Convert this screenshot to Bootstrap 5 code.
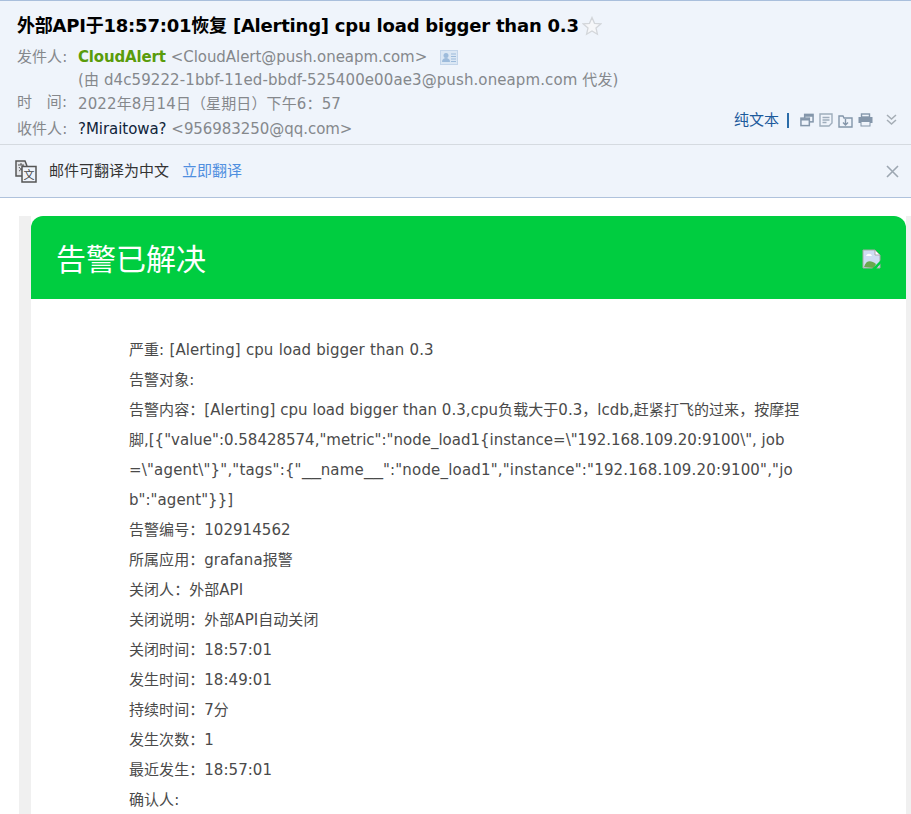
<!DOCTYPE html>
<html lang="zh-CN">
<head>
  <meta charset="UTF-8">
  <meta name="viewport" content="width=device-width, initial-scale=1.0">
  <title>告警已解决</title>
  <link href="https://cdn.jsdelivr.net/npm/bootstrap@5.3.2/dist/css/bootstrap.min.css" rel="stylesheet">
  <style>
    html, body { height: 814px; overflow: hidden; }
    body { font-family: "DejaVu Sans", Verdana, "Noto Sans CJK SC", sans-serif; background: #fff; }
    .mail-head { background: #eff4fb; border-top: 1px solid #a9bfdc; border-bottom: 1px solid #d5dae0; height: 145px; padding: 13px 17px 0; position: relative; }
    .mail-title { font-size: 18px; font-weight: 700; color: #000; line-height: 24px; margin: 0 0 7.7px; letter-spacing: -.22px; }
    .star-ico { margin-left: 3px; vertical-align: -4px; }
    .meta-row { display: flex; font-size: 15px; line-height: 23.3px; color: #85888c; white-space: nowrap; letter-spacing: .05px; }
    .meta-key { width: 61px; flex: none; }
    .date-row { margin-top: -1px; margin-bottom: 1px; letter-spacing: .12px; }
    .sender-name { color: #5a9c0b; font-weight: 700; letter-spacing: -.15px; }
    .to-name { color: #10243a; letter-spacing: -.05px; }
    .addr-text { letter-spacing: -.05px; }
    .proxy-text { letter-spacing: .1px; }
    .card-ico { margin-left: 8px; vertical-align: -3px; }
    .tc-colon { font-family: "Noto Sans CJK TC", sans-serif; }
    .head-tools { position: absolute; right: 14px; top: 108px; gap: 5px; font-size: 15px; color: #1c5a9c; }
    .tools-sep { width: 2px; height: 15px; background: #2b6ca8; margin: 0 6px 0 3px; }
    .trans-bar { background: #eff4fb; border-bottom: 1px solid #afc2dc; height: 53px; padding: 0 12px 0 15px; font-size: 15px; color: #333; }
    .trans-link { color: #4f8fdf; margin-left: 13px; padding-top: 1px; }
    .trans-text { margin-left: 12px; padding-top: 1px; }
    .mail-body { background: #fff; padding: 18px 5px 0 19px; }
    .gray-wrap { background: #f0f0f0; padding-left: 12px; margin-right: -5px; padding-right: 5px; }
    .alert-box { background: #fff; }
    .alert-top { background: #00cd40; height: 83px; border-radius: 12px 12px 0 0; padding: 0 24px 0 25px; color: #fff; }
    .alert-title { font-size: 30px; font-weight: 400; margin: 0 0 2px; font-family: "Noto Sans CJK SC", sans-serif; }
    .broken-ico { margin-top: 2px; }
    .alert-body { padding: 36px 100px 30px 98px; font-size: 15px; line-height: 30px; color: #4a4a4a; white-space: nowrap; letter-spacing: .05px; }
    .first-row { word-spacing: .5px; }
    .last-row { line-height: 22px; padding-top: 4px; }
    .line-tight { letter-spacing: 0; }
    .line-wide { letter-spacing: .18px; }
    .wide-under { display: inline-block; width: 19px; letter-spacing: 0; transform: scaleX(1.27); transform-origin: left; }
  </style>
</head>
<body>
  <div class="mail-head">
    <h1 class="mail-title">外部API于18:57:01恢复 [Alerting] cpu load bigger than 0.3<svg class="star-ico" width="20" height="20" viewBox="0 0 20 20"><path d="M10 1.500l2.500 5.800 6.200.6-4.700 4.100 1.400 6.200L10 15l-5.400 3.200 1.400-6.200-4.700-4.100 6.200-.6z" fill="#f6f7f9" stroke="#d3d6da" stroke-width="1.300"/></svg></h1>
    <div class="meta-row"><span class="meta-key">发件人:</span><span><span class="sender-name">CloudAlert</span> <span class="addr-text">&lt;CloudAlert@push.oneapm.com&gt;</span>
      <svg class="card-ico" width="18" height="15" viewBox="0 0 18 15"><rect width="18" height="15" fill="#c3d5ea"/><rect x="1" y="1" width="16" height="13" fill="#dbe7f4"/><circle cx="6" cy="5.500" r="2.500" fill="#9dbbdb"/><path d="M2 12c0-3 2-4 4-4s4 1 4 4z" fill="#9dbbdb"/><path d="M11 4h5M11 6.500h5M11 9h5M11 11.500h5" stroke="#9dbbdb"/></svg></span></div>
    <div class="meta-row"><span class="meta-key"></span><span class="proxy-text">(由 d4c59222-1bbf-11ed-bbdf-525400e00ae3@push.oneapm.com 代发)</span></div>
    <div class="meta-row date-row"><span class="meta-key">时&nbsp;&nbsp;&nbsp;间:</span><span>2022年8月14日（星期日）下午6<span class="tc-colon">：</span>57</span></div>
    <div class="meta-row"><span class="meta-key">收件人:</span><span><span class="to-name">?Miraitowa?</span> <span class="addr-text">&lt;956983250@qq.com&gt;</span></span></div>
    <div class="head-tools d-flex align-items-center">
      <span>纯文本</span><span class="tools-sep"></span>
      <svg width="14" height="14" viewBox="0 0 15 14" fill="none" stroke="#8496aa" stroke-width="1.600"><rect x="5" y="1" width="9" height="8"/><rect x="1" y="5" width="9" height="8" fill="#eff4fb"/><path d="M1 6.500h9M5 2.500h9" stroke-width="2"/></svg>
      <svg width="14" height="14" viewBox="0 0 14 14" fill="none" stroke="#9fadbc" stroke-width="1.400"><path d="M1 1h12v9l-3 3H1z"/><path d="M3.500 4.500h7M3.500 7h7M3.500 9.500h4"/></svg>
      <svg width="15" height="15" viewBox="0 0 15 15" fill="none" stroke="#8496aa" stroke-width="1.400"><path d="M1 14V3h4l1 2h8v9z"/><path d="M7.500 6v6M5 9.500l2.500 2.500L10 9.500"/></svg>
      <svg width="15" height="14" viewBox="0 0 15 14"><rect x="3.500" y="1" width="8" height="3" fill="none" stroke="#8496aa" stroke-width="1.400"/><rect x="0.500" y="4" width="14" height="6" fill="#8496aa"/><rect x="3" y="8.500" width="9" height="4.500" fill="#eff4fb" stroke="#8496aa"/></svg>
      <svg class="ms-2" width="11" height="12" viewBox="0 0 11 12" fill="none" stroke="#a5adb5" stroke-width="1.500"><path d="M1 1l4.500 4L10 1M1 6l4.500 4L10 6"/></svg>
    </div>
  </div>
  <div class="trans-bar d-flex align-items-center">
    <svg width="22" height="23" viewBox="0 0 22 23" fill="none" stroke="#555"><path d="M11 16H1V1h9l2 5" stroke-width="1.500" fill="#e4e6ea"/><path d="M3 5h6M6 3v2M4 11c2-1 4-3 4-6M4 7c1 2 3 3 5 4" stroke-width="1"/><rect x="7" y="6.500" width="14" height="15.500" fill="#eff4fb" stroke-width="1.500"/><text x="14" y="19" font-size="11" text-anchor="middle" fill="#444" stroke="none" font-family="Noto Sans CJK SC">文</text></svg>
    <span class="trans-text">邮件可翻译为中文</span><a class="trans-link text-decoration-none" href="#">立即翻译</a>
    <svg class="ms-auto" width="13" height="13" viewBox="0 0 13 13" stroke="#9da7b2" stroke-width="1.600"><path d="M1 1l11 11M12 1L1 12"/></svg>
  </div>
  <div class="mail-body">
    <div class="gray-wrap">
      <div class="alert-box">
        <div class="alert-top d-flex align-items-center justify-content-between">
          <h2 class="alert-title">告警已解决</h2>
          <svg class="broken-ico" width="20" height="20" viewBox="0 0 20 20"><path d="M1 1h12l5 5v13H1z" fill="#cfdcf3" stroke="#a8a8a8"/><path d="M13 1v5h5z" fill="#fff" stroke="#a8a8a8"/><path d="M4 7c1-3 5-3 6 0z" fill="#fff"/><path d="M2 18c2-7 7-7 12-3l-2 4z" fill="#6aa84f"/><path d="M10 20L20 10v3L14 20z" fill="#00cd40"/></svg>
        </div>
        <div class="alert-body">
          <div class="first-row">严重: [Alerting] cpu load bigger than 0.3</div>
          <div>告警对象:</div>
          <div>告警内容：[Alerting] cpu load bigger than 0.3,cpu负载大于0.3，lcdb,赶紧打飞的过来，按摩捏<br><span class="line-tight">脚,[{"value":0.58428574,"metric":"node_load1{instance=\"192.168.109.20:9100\", job</span><br><span class="line-wide">=\"agent\"}","tags":{"<span class="wide-under">__</span>name<span class="wide-under">__</span>":"node_load1","instance":"192.168.109.20:9100","jo</span><br>b":"agent"}}]</div>
          <div>告警编号：102914562</div>
          <div>所属应用：grafana报警</div>
          <div>关闭人：外部API</div>
          <div>关闭说明：外部API自动关闭</div>
          <div>关闭时间：18:57:01</div>
          <div>发生时间：18:49:01</div>
          <div>持续时间：7分</div>
          <div>发生次数：1</div>
          <div>最近发生：18:57:01</div>
          <div class="last-row">确认人:</div>
        </div>
      </div>
    </div>
  </div>
  <script src="https://cdn.jsdelivr.net/npm/bootstrap@5.3.2/dist/js/bootstrap.bundle.min.js"></script>
</body>
</html>
